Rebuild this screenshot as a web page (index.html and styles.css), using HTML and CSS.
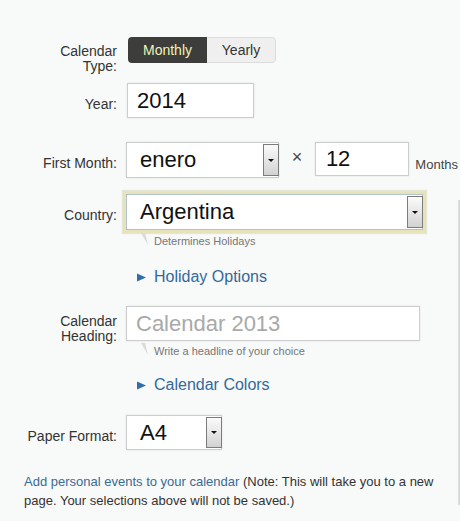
FILE: index.html
```html
<!DOCTYPE html>
<html>
<head>
<meta charset="utf-8">
<link rel="stylesheet" href="styles.css">
</head>
<body>
<div class="page">
  <div class="form">
    <div class="row r-type">
      <div class="label two">Calendar<br>Type:</div>
      <div class="toggle"><span class="seg on">Monthly</span><span class="seg off">Yearly</span></div>
    </div>

    <div class="row r-year">
      <div class="label">Year:</div>
      <div class="field year">2014</div>
    </div>

    <div class="row r-month">
      <div class="label">First Month:</div>
      <div class="select month"><span class="val">enero</span><span class="arrow"><i></i></span></div>
      <span class="times">×</span>
      <div class="field count">12</div>
      <span class="unit">Months</span>
    </div>

    <div class="row r-country">
      <div class="label">Country:</div>
      <div class="ctrl">
        <div class="select country"><span class="val">Argentina</span><span class="arrow"><i></i></span></div>
        <div class="hint"><svg class="tail" width="8" height="12" viewBox="0 0 8 12"><polygon points="0,0 4,0 7,12" fill="#d9dbdb"/></svg><span>Determines Holidays</span></div>
      </div>
    </div>

    <div class="expander opt-holiday"><svg class="tri" width="9" height="9" viewBox="0 0 9 9"><polygon points="0,0.5 9,4.5 0,8.5" fill="#2f6ea8"/></svg><span>Holiday Options</span></div>

    <div class="row r-heading">
      <div class="label two heading-label">Calendar<br>Heading:</div>
      <div class="ctrl">
        <div class="field heading placeholder">Calendar 2013</div>
        <div class="hint hint2"><svg class="tail" width="8" height="12" viewBox="0 0 8 12"><polygon points="0,0 4,0 7,12" fill="#d9dbdb"/></svg><span>Write a headline of your choice</span></div>
      </div>
    </div>

    <div class="expander opt-colors"><svg class="tri" width="9" height="9" viewBox="0 0 9 9"><polygon points="0,0.5 9,4.5 0,8.5" fill="#2f6ea8"/></svg><span>Calendar Colors</span></div>

    <div class="row r-paper">
      <div class="label">Paper Format:</div>
      <div class="select paper"><span class="val">A4</span><span class="arrow"><i></i></span></div>
    </div>

    <p class="note"><a href="#" class="link">Add personal events to your calendar</a> (Note: This will take you to a new page. Your selections above will not be saved.)</p>
  </div>
  <div class="side"></div>
</div>
</body>
</html>
```

FILE: styles.css
```css
html, body {
  margin: 0;
  padding: 0;
  background: #f8f9f9;
}
body {
  font-family: "Liberation Sans", Arial, sans-serif;
  color: #333;
  overflow: hidden;
}
.page {
  display: flex;
  width: 460px;
  height: 521px;
}
.form {
  flex: none;
  width: 436px;
  padding-left: 22px;
}
.side {
  flex: none;
  width: 2px;
  height: 305px;
  margin-top: 200px;
  background: linear-gradient(to right, #e4e5e5, #cfd1d1);
}
.row {
  display: flex;
  align-items: flex-start;
}
.label {
  flex: none;
  width: 95px;
  margin-right: 9px;
  text-align: right;
  font-size: 14px;
  line-height: 14px;
  padding-top: 14px;
  color: #333;
  white-space: nowrap;
}
.label.two { line-height: 14.5px; }

/* row spacing */
.r-type { margin-top: 37px; }
.r-type .label { padding-top: 7px; }
.r-year { margin-top: 10px; }
.r-month { margin-top: 24px; }
.r-country { margin-top: 16px; }
.r-country .label { padding-top: 14px; }
.r-heading { margin-top: 19px; }
.heading-label { padding-top: 8px; line-height: 15px !important; }
.r-paper { margin-top: 20px; }

/* toggle */
.toggle {
  display: flex;
  margin-left: 2px;
  height: 26px;
  border-radius: 4px;
  overflow: hidden;
  font-size: 14px;
}
.seg {
  display: flex;
  align-items: center;
  justify-content: center;
}
.seg.on {
  width: 79px;
  background: #3d3d3b;
  color: #f1f2b4;
}
.seg.off {
  width: 69px;
  box-sizing: border-box;
  background: #efefef;
  color: #333;
  border: 1px solid #dcdcdc;
  border-left: 0;
  border-radius: 0 4px 4px 0;
}

/* fields */
.field, .select {
  box-sizing: border-box;
  background: #fff;
  border: 1px solid #cdcdcd;
  box-shadow: 0 0 2px rgba(0,0,0,0.10);
  font-size: 22px;
  color: #111;
  display: flex;
  align-items: center;
}
.field.year {
  margin-left: 1px;
  width: 127px;
  height: 35px;
  padding-left: 9px;
}
.select {
  padding: 1px 0 1px 13px;
  justify-content: space-between;
}
.select .val { flex: 1; }
.arrow {
  flex: none;
  align-self: stretch;
  width: 16px;
  box-sizing: border-box;
  margin-right: -1px;
  border: 1px solid #7c7c7c;
  background: linear-gradient(#fbfbfb, #d2d2d2);
  display: flex;
  align-items: center;
  justify-content: center;
}
.arrow i {
  display: block;
  width: 0;
  height: 0;
  border-left: 3px solid transparent;
  border-right: 3px solid transparent;
  border-top: 3px solid #111;
}
.select.month {
  width: 154px;
  height: 36px;
}
.times {
  width: 36px;
  text-align: center;
  font-size: 18px;
  line-height: 31px;
  color: #444;
}
.field.count {
  width: 95px;
  height: 34px;
  padding-left: 10px;
}
.unit {
  margin-left: 6px;
  font-size: 13px;
  line-height: 15px;
  padding-top: 15px;
  white-space: nowrap;
  color: #444;
}
.ctrl {
  display: flex;
  flex-direction: column;
}
.select.country {
  width: 297px;
  height: 36px;
  border-color: #b3c3cb;
  box-shadow: 0 0 0 3px #e6e3bb, 0 0 1px 4px rgba(200,195,140,0.35);
}
.hint {
  display: flex;
  align-items: flex-start;
  margin-top: 5px;
  font-size: 11px;
  line-height: 13px;
  color: #777;
}
.hint .tail {
  flex: none;
  margin-left: 15px;
  margin-right: 5px;
  margin-top: -2px;
}
.hint2 { margin-top: 4px; }
.field.heading {
  width: 294px;
  height: 35px;
  padding-left: 9px;
}
.placeholder { color: #a9a9a9; }

.expander {
  display: flex;
  align-items: center;
  padding-left: 115px;
  font-size: 16px;
  line-height: 20px;
  color: #33699a;
}
.expander .tri { margin-right: 8px; }
.opt-holiday { margin-top: 19px; }
.opt-colors { margin-top: 17px; }

.select.paper {
  width: 96px;
  height: 35px;
}
.note {
  margin: 22px 0 0 2px;
  font-size: 13px;
  line-height: 19px;
  color: #333;
}
.link {
  color: #3a6a96;
  text-decoration: none;
}
```
